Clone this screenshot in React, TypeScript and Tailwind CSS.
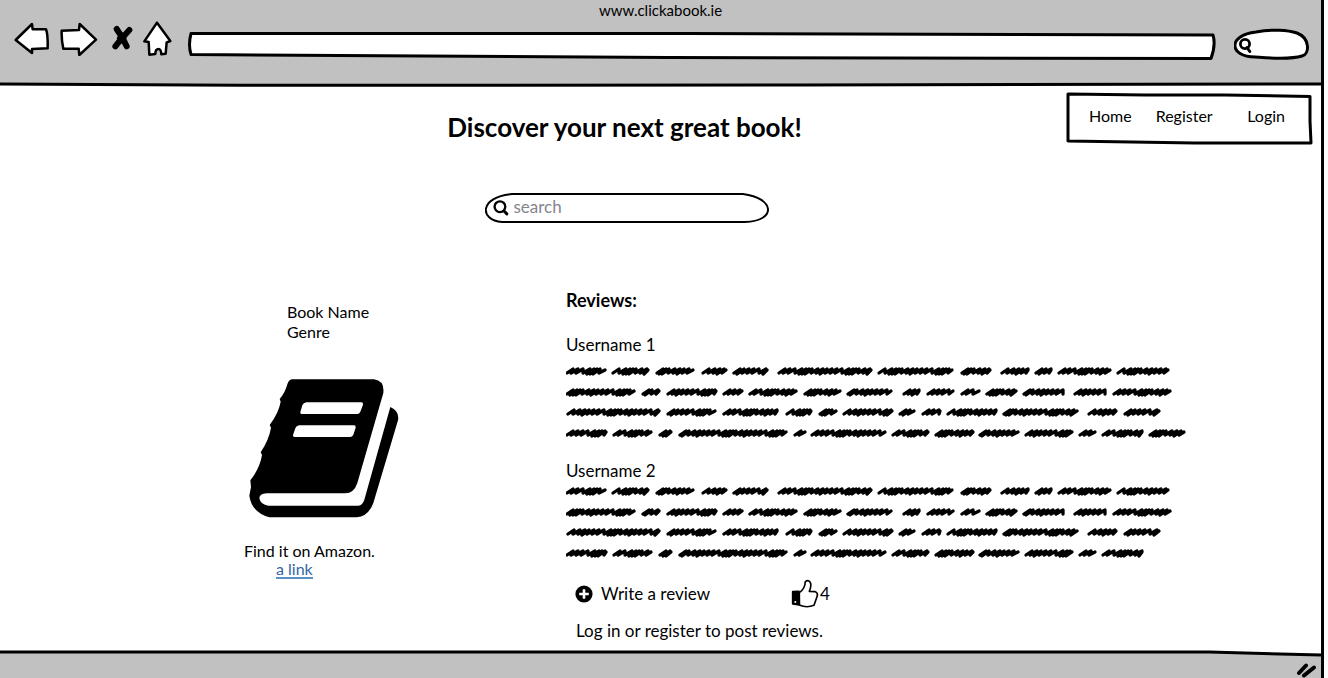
import type { ReactNode } from "react";

type Word = [start: number, end: number];

const firstLines: Word[][] = [
  [[0, 41], [46, 84], [90, 129], [136, 162], [167, 203], [212, 307], [312, 388], [395, 426], [435, 464], [469, 487], [492, 546], [551, 604]],
  [[0, 70], [76, 95], [101, 152], [157, 178], [183, 232], [238, 276], [281, 327], [337, 355], [361, 389], [395, 415], [420, 452], [457, 499], [508, 541], [547, 606]],
  [[1, 95], [101, 151], [157, 213], [220, 247], [253, 272], [277, 328], [333, 350], [356, 376], [381, 432], [437, 513], [522, 552], [558, 595]],
];

const lastLine: Word[] = [
  [0, 42], [47, 87], [93, 107], [113, 222], [228, 241], [245, 321], [326, 364], [369, 409], [413, 454], [459, 508], [513, 531], [536, 578], [583, 620],
];

const baselines = [6, 27, 47, 68];

const steps = [5, 5, 7, 4, 3, 3, 6, 5, 4, 5];

function scribble([start, end]: Word, y: number, seed: number) {
  let x = start + 1;
  let d = `M${x} ${y + 2}`;
  let i = seed;
  while (x + 7 < end) {
    const step = steps[i % steps.length];
    const drop = step < 5 ? 3 : 2;
    d += `L${x + 6} ${y - 2}L${x + step - 1} ${y + drop}`;
    x += step;
    i += 1;
  }
  return d + `L${end - 2} ${y - 1}`;
}

function ScribbleText({ lines }: { lines: Word[][] }) {
  return (
    <svg viewBox="0 0 622 74" className="block h-[74px] w-[622px]" role="img" aria-label="Review text" fill="none" stroke="#000" strokeWidth="3.3" strokeLinecap="round" strokeLinejoin="round">
      {lines.map((words, row) =>
        words.map((word, i) => <path key={`${row}-${i}`} d={scribble(word, baselines[row], row * 3 + i * 2)} />),
      )}
    </svg>
  );
}

function Outline({ box, d, width = 3, fill = "#fff" }: { box: string; d: string; width?: number; fill?: string }) {
  return (
    <svg viewBox={box} preserveAspectRatio="none" className="absolute inset-0 h-full w-full" aria-hidden="true">
      <path d={d} fill={fill} stroke="#000" strokeWidth={width} strokeLinejoin="round" vectorEffect="non-scaling-stroke" />
    </svg>
  );
}

function ToolButton({ label, className, box, children }: { label: string; className: string; box: string; children: ReactNode }) {
  return (
    <button type="button" aria-label={label} className={className}>
      <svg viewBox={box} className="block h-full w-full" fill="#fff" stroke="#000" strokeWidth="7.5" strokeLinejoin="round" strokeLinecap="round">
        {children}
      </svg>
    </button>
  );
}

function Magnifier({ className }: { className: string }) {
  return (
    <svg viewBox="0 0 15 15" className={className} fill="none" stroke="#000" strokeLinecap="round" aria-hidden="true">
      <circle cx="6.5" cy="6.3" r="5" strokeWidth="2.2" />
      <path d="M10.3 10.3L13 13" strokeWidth="2.8" />
    </svg>
  );
}

function SmallMagnifier() {
  return (
    <svg viewBox="0 0 14 16" className="absolute top-[10px] left-1 h-4 w-[14px]" fill="none" stroke="#000" strokeLinecap="round" aria-hidden="true">
      <circle cx="7" cy="6" r="4.6" strokeWidth="2.8" />
      <path d="M9 9.5L11.8 13.5" strokeWidth="3" />
    </svg>
  );
}

function BrowserBar() {
  return (
    <header className="bg-[#c1c1c1]">
      <p className="h-5 text-center text-[15px] leading-5">www.clickabook.ie</p>
      <div className="flex h-[62px] items-start pr-[11px] pl-[13px]">
        <ToolButton label="Back" className="h-9 w-[38px]" box="40 61 114 108">
          <path d="M48 121L97 73L99 89L139 89Q145 104 144 146L97 148L97 160Z" />
        </ToolButton>
        <ToolButton label="Forward" className="ml-[9px] h-9 w-[38px]" box="180 61 114 108">
          <path d="M185 93L237 91L239 73L288 120L238 166L236 147L190 147Q184 120 185 93Z" />
        </ToolButton>
        <ToolButton label="Stop" className="ml-3 h-9 w-6" box="330 61 72 108">
          <path d="M350 88Q370 118 380 140M388 91Q360 122 346 140" strokeWidth="18" />
          <path d="M364 100L376 116L366 128L354 116Z" fill="#000" />
        </ToolButton>
        <ToolButton label="Home" className="ml-2 h-9 w-[30px]" box="427 61 90 108">
          <path d="M472 69L512 124L501 128L498 162L485 164Q484 148 477 148Q467 148 467 163L449 165L447 127L434 125Z" />
        </ToolButton>
        <div className="relative ml-4 mt-3 h-7 min-w-0 flex-1">
          <Outline box="0 0 1027 28" d="M3 1.5Q0 13 3 22.5L480 25.5L1022 26.5Q1027 13 1024 3L500 1.5Z" />
          <input aria-label="Address" className="relative block h-full w-full bg-transparent px-3 outline-none" />
        </div>
        <div className="relative ml-[18px] mt-2 h-8 w-[76px]">
          <Outline box="0 0 76 32" d="M21 29C-5 29 -7 7 22 4C38 1 54 2 63 5C76 10 76 26 68 28C55 32 35 30 21 29Z" />
          <SmallMagnifier />
          <input aria-label="Web search" className="relative block h-full w-full bg-transparent pl-6 pr-3 outline-none" />
        </div>
      </div>
      <svg viewBox="0 0 1322 5" preserveAspectRatio="none" className="block h-[5px] w-full bg-white" aria-hidden="true">
        <path d="M0 0H1322V2H0Z" fill="#c1c1c1" />
        <path d="M0 2L240 3.3L800 3L1322 2" fill="none" stroke="#000" strokeWidth="3" />
      </svg>
    </header>
  );
}

function Book() {
  return (
    <svg viewBox="54 265 456 420" className="mt-9 ml-[4px] block h-[140px] w-[152px]" role="img" aria-label="Book cover">
      <path d="M186 269L432 269Q464 273 460 310L382 580Q372 611 345 611L110 611Q88 612 88 626Q92 646 115 648L385 648Q398 646 403 630L481 352Q509 364 504 392L430 640Q415 680 380 683L118 683Q65 668 58 618L63 592L61 572Q90 535 96 496L92 488Q117 450 123 414L119 406Q146 370 152 336L149 328Q165 310 172 284Q176 270 186 269Z" />
      <path fill="#fff" d="M229 338H394Q400 338 399 345L391 366Q388 373 382 373H215Q210 373 211 367L217 347Q220 339 229 338ZM207 407H372Q378 407 377 414L370 435Q367 442 360 442H194Q188 442 189 436L196 416Q199 408 207 407Z" />
    </svg>
  );
}

function Thumb() {
  return (
    <svg viewBox="709 369 84 90" className="h-[30px] w-7" fill="#fff" stroke="#000" strokeWidth="5" strokeLinejoin="round" aria-hidden="true">
      <path d="M734 410Q751 398 752 377Q763 369 768 382Q770 394 764 406L782 407Q791 410 787 422L778 448Q756 457 734 447Z" />
      <path d="M714 407L733 406L734 447L714 444Z" fill="#000" />
      <circle cx="722" cy="438" r="3" stroke="none" />
    </svg>
  );
}

function PlusBadge() {
  return (
    <svg viewBox="0 0 18 18" className="h-[18px] w-[18px]" aria-hidden="true">
      <circle cx="9" cy="9" r="8.6" />
      <path d="M9 4.2V13.8M4.2 9H13.8" stroke="#fff" strokeWidth="2.6" />
    </svg>
  );
}

export default function App() {
  return (
    <div className="min-h-screen bg-[#fcfcfc] pr-1 font-['Lato','Open_Sans',sans-serif] text-base leading-5 text-black">
      <div className="flex min-h-screen flex-col border-r-[3px] border-black bg-white">
        <BrowserBar />
        <main className="flex-1 pb-1">
          <div className="grid grid-cols-[1fr_auto_1fr]">
            <div />
            <div className="mr-[72px] flex flex-col items-center">
              <h1 className="mt-6 text-[26px] leading-8 font-bold">Discover your next great book!</h1>
              <div className="relative mt-[49px] ml-2 h-8 w-[286px]">
                <Outline box="0 0 286 32" d="M27 2L258 2C290 6 292 29 260 30L17 30C-6 28 -6 5 27 2Z" width={2} />
                <Magnifier className="absolute top-2 left-2 h-4 w-4" />
                <input type="search" aria-label="Search books" placeholder="search" className="relative block h-7 w-full bg-transparent pl-7 text-[17px] outline-none placeholder:text-[#85858f]" />
              </div>
            </div>
            <nav aria-label="Main" className="relative mt-1 mr-2 flex h-[54px] w-[248px] items-center gap-6 justify-self-end pr-7 pb-1 pl-6">
              <Outline box="0 0 248 54" d="M3 3L80 4L160 4L245 5.5L245 30L246 52L130 52L3 50L3 26Z" />
              <a href="#home" className="relative">Home</a>
              <a href="#register" className="relative">Register</a>
              <a href="#login" className="relative ml-auto">Login</a>
            </nav>
          </div>
          <div className="mt-[66px] flex pl-[244px]">
            <section aria-label="Book" className="mt-3 w-[322px] shrink-0">
              <h2 className="ml-[43px]">Book Name</h2>
              <p className="ml-[43px]">Genre</p>
              <Book />
              <p className="mt-6 leading-[18px]">Find it on Amazon.</p>
              <a href="#amazon" className="ml-8 block w-fit border-b-2 border-[#5b8fc4] leading-[17px] text-[#3465a4]">a link</a>
            </section>
            <section aria-labelledby="reviews" className="text-[17px] leading-5">
              <h2 id="reviews" className="text-lg leading-5 font-bold">Reviews:</h2>
              <h3 className="mt-[25px] mb-[10px]">Username 1</h3>
              <ScribbleText lines={[...firstLines, lastLine]} />
              <h3 className="mt-[22px] mb-1">Username 2</h3>
              <ScribbleText lines={[...firstLines, lastLine.slice(0, -1)]} />
              <div className="mt-5 flex h-[30px] items-center pl-[9px]">
                <button type="button" className="flex w-[216px] items-center gap-2">
                  <PlusBadge />
                  Write a review
                </button>
                <button type="button" aria-label="Like, 4" className="flex items-center gap-px">
                  <Thumb />
                  <span>4</span>
                </button>
              </div>
              <p className="mt-3 ml-[10px]">Log in or register to post reviews.</p>
            </section>
          </div>
        </main>
        <footer className="relative">
          <svg viewBox="0 0 1322 28" preserveAspectRatio="none" className="block h-7 w-full" aria-hidden="true">
            <path d="M0 1.5L1210 2L1322 5V28H0Z" fill="#c1c1c1" />
            <path d="M0 2L1210 2L1322 5" fill="none" stroke="#000" strokeWidth="3" />
          </svg>
          <svg viewBox="0 0 22 16" className="absolute right-1 bottom-0 h-4 w-[22px]" stroke="#000" strokeWidth="4" strokeLinecap="round" aria-hidden="true">
            <path d="M4 11L11 3.5M9 13.5L19 5.5" />
          </svg>
        </footer>
      </div>
    </div>
  );
}
